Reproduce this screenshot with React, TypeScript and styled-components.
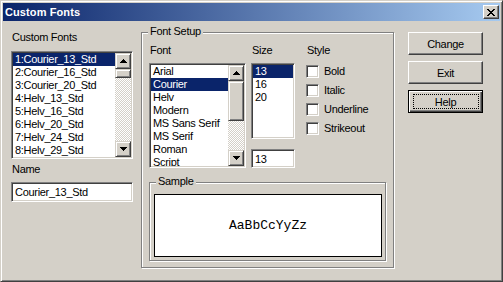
import styled, { createGlobalStyle, css } from 'styled-components';

const GlobalStyle = createGlobalStyle`
  html, body {
    margin: 0;
    padding: 0;
    background: #d4d0c8;
  }
  * {
    box-sizing: border-box;
  }
`

const raised = css`
  background-color: #d4d0c8;
  border: 1px solid;
  border-color: #d4d0c8 #404040 #404040 #d4d0c8;
  box-shadow: inset 1px 1px 0 #fff, inset -1px -1px 0 #808080;
`

const sunken = css`
  background-color: #fff;
  border: 1px solid;
  border-color: #808080 #fff #fff #808080;
  box-shadow: inset 1px 1px 0 #404040, inset -1px -1px 0 #d4d0c8;
`

const Window = styled.div`
  width: 503px;
  height: 282px;
  display: flex;
  flex-direction: column;
  padding: 2px;
  font-family: "Liberation Sans", Arial, sans-serif;
  font-size: 11px;
  letter-spacing: -0.3px;
  color: #000;
  ${raised}
`

const TitleBar = styled.div`
  height: 18px;
  display: flex;
  align-items: center;
  justify-content: space-between;
  padding: 0 1px 0 2px;
  background: linear-gradient(to right, #0a246a, #a6caf0);
`

const Title = styled.span`
  color: #fff;
  font-weight: 700;
  font-size: 11px;
  letter-spacing: 0.1px;
`

const CloseButton = styled.div`
  width: 16px;
  height: 14px;
  display: flex;
  align-items: center;
  justify-content: center;
  border: 1px solid;
  border-color: #fff #404040 #404040 #fff;
  box-shadow: inset -1px -1px 0 #808080;
  background: #d4d0c8;
`

const Body = styled.div`
  flex: 1;
  display: flex;
  align-items: flex-start;
  padding: 11px 0 0 8px;
`

const LeftColumn = styled.div`
  width: 122px;
  margin-top: -1px;
  display: flex;
  flex-direction: column;
`

const Label = styled.div<{ $gap?: number }>`
  height: 13px;
  line-height: 13px;
  padding-left: 1px;
  margin-bottom: ${p => p.$gap ?? 6}px;
  white-space: nowrap;
`

const ListBox = styled.div<{ $h: number }>`
  display: flex;
  height: ${p => p.$h}px;
  padding: 1px;
  ${sunken}
`

const Items = styled.ul`
  flex: 1;
  margin: 0;
  padding: 0;
  list-style: none;
  overflow: hidden;
`

const Item = styled.li<{ $selected?: boolean }>`
  height: 13px;
  line-height: 13px;
  padding-left: 2px;
  white-space: nowrap;
  background: ${p => (p.$selected ? '#0a246a' : 'transparent')};
  color: ${p => (p.$selected ? '#fff' : '#000')};
`

const ScrollBar = styled.div`
  width: 16px;
  display: flex;
  flex-direction: column;
`

const ScrollButton = styled.div`
  height: 16px;
  display: flex;
  align-items: center;
  justify-content: center;
  ${raised}
`

const Thumb = styled.div<{ $h: number }>`
  height: ${p => p.$h}px;
  ${raised}
`

const Track = styled.div`
  flex: 1;
  background: repeating-conic-gradient(#fff 0 25%, #d4d0c8 0 50%) 0 0 / 2px 2px;
`

const TextField = styled.input`
  width: 100%;
  height: 20px;
  margin: 0;
  padding: 0 0 0 3px;
  font: inherit;
  letter-spacing: inherit;
  color: #000;
  outline: none;
  ${sunken}
`

const GroupBox = styled.div`
  position: relative;
  border: 1px solid #808080;
  box-shadow: inset 1px 1px 0 #fff, 1px 1px 0 #fff;
`

const FontSetup = styled(GroupBox)`
  width: 253px;
  height: 236px;
  margin-left: 8px;
  padding: 11px 7px 5px 7px;
  display: flex;
  flex-direction: column;
`

const Legend = styled.span`
  position: absolute;
  top: -8px;
  left: 6px;
  padding: 0 2px;
  line-height: 13px;
  background: #d4d0c8;
`

const SetupRow = styled.div`
  display: flex;
  align-items: flex-start;
`

const Column = styled.div<{ $w: number; $ml?: number }>`
  width: ${p => p.$w}px;
  margin-left: ${p => p.$ml ?? 0}px;
  display: flex;
  flex-direction: column;
`

const SizeField = styled(TextField)`
  height: 19px;
  margin-top: 10px;
`

const Checks = styled.div`
  display: flex;
  flex-direction: column;
  gap: 6px;
  margin-top: 2px;
`

const CheckRow = styled.label`
  display: flex;
  align-items: center;
  gap: 5px;
  height: 13px;
  line-height: 13px;
`

const CheckBox = styled.span`
  width: 13px;
  height: 13px;
  ${sunken}
`

const Sample = styled(GroupBox)`
  width: 237px;
  height: 79px;
  margin-top: 14px;
  padding: 11px 3px 3px 4px;
  display: flex;
`

const SampleBox = styled.div`
  flex: 1;
  display: flex;
  align-items: center;
  justify-content: center;
  background: #fff;
  border: 1px solid #000;
  font-family: "Liberation Mono", "Courier New", monospace;
  font-size: 13px;
  letter-spacing: 0;
`

const Buttons = styled.div`
  margin-left: 14px;
  display: flex;
  flex-direction: column;
  gap: 6px;
`

const Button = styled.button<{ $default?: boolean }>`
  position: relative;
  width: 75px;
  height: 23px;
  margin: 0;
  padding: 0;
  font: inherit;
  letter-spacing: inherit;
  color: #000;
  background: #d4d0c8;
  border: 1px solid;
  border-color: #fff #404040 #404040 #fff;
  box-shadow: inset -1px -1px 0 #808080;

  ${p => p.$default && css`
    border-color: #000;
    box-shadow: inset 1px 1px 0 #fff, inset -1px -1px 0 #404040, inset -2px -2px 0 #808080;

    &::after {
      content: '';
      position: absolute;
      top: 3px;
      left: 4px;
      right: 3px;
      bottom: 3px;
      border: 1px dotted #000;
    }
  `}
`

const Arrow = ({ down }: { down?: boolean }) => (
  <svg width="7" height="4" viewBox="0 0 7 4" shapeRendering="crispEdges"
    style={down ? { transform: 'rotate(180deg)' } : undefined}>
    <path d="M3 0h1v1h-1z M2 1h3v1h-3z M1 2h5v1h-5z M0 3h7v1h-7z" fill="#000" />
  </svg>
)

const CloseGlyph = () => (
  <svg width="8" height="7" viewBox="0 0 8 7" shapeRendering="crispEdges">
    <path
      d="M0 0h2v1h-2z M6 0h2v1h-2z M1 1h2v1h-2z M5 1h2v1h-2z M2 2h4v1h-4z M3 3h2v1h-2z M2 4h4v1h-4z M1 5h2v1h-2z M5 5h2v1h-2z M0 6h2v1h-2z M6 6h2v1h-2z"
      fill="#000"
    />
  </svg>
)

const customFonts = [
  '1:Courier_13_Std', '2:Courier_16_Std', '3:Courier_20_Std', '4:Helv_13_Std',
  '5:Helv_16_Std', '6:Helv_20_Std', '7:Helv_24_Std', '8:Helv_29_Std',
]
const fonts = ['Arial', 'Courier', 'Helv', 'Modern', 'MS Sans Serif', 'MS Serif', 'Roman', 'Script']
const sizes = ['13', '16', '20']
const styles = ['Bold', 'Italic', 'Underline', 'Strikeout']

const App: React.FC = () => {
  return (
    <>
      <GlobalStyle />
      <Window>
        <TitleBar>
          <Title>Custom Fonts</Title>
          <CloseButton><CloseGlyph /></CloseButton>
        </TitleBar>
        <Body>
          <LeftColumn>
            <Label $gap={7}>Custom Fonts</Label>
            <ListBox $h={108}>
              <Items>
                {customFonts.map((f, i) => <Item key={f} $selected={i === 0}>{f}</Item>)}
              </Items>
              <ScrollBar>
                <ScrollButton><Arrow /></ScrollButton>
                <Thumb $h={9} />
                <Track />
                <ScrollButton><Arrow down /></ScrollButton>
              </ScrollBar>
            </ListBox>
            <Label $gap={6} style={{ marginTop: 4 }}>Name</Label>
            <TextField readOnly defaultValue="Courier_13_Std" />
          </LeftColumn>

          <FontSetup>
            <Legend>Font Setup</Legend>
            <SetupRow>
              <Column $w={97}>
                <Label>Font</Label>
                <ListBox $h={105}>
                  <Items>
                    {fonts.map(f => <Item key={f} $selected={f === 'Courier'}>{f}</Item>)}
                  </Items>
                  <ScrollBar>
                    <ScrollButton><Arrow /></ScrollButton>
                    <Thumb $h={40} />
                    <Track />
                    <ScrollButton><Arrow down /></ScrollButton>
                  </ScrollBar>
                </ListBox>
              </Column>
              <Column $w={44} $ml={5}>
                <Label>Size</Label>
                <ListBox $h={76}>
                  <Items>
                    {sizes.map(s => <Item key={s} $selected={s === '13'}>{s}</Item>)}
                  </Items>
                </ListBox>
                <SizeField readOnly defaultValue="13" />
              </Column>
              <Column $w={80} $ml={11}>
                <Label>Style</Label>
                <Checks>
                  {styles.map(s => (
                    <CheckRow key={s}><CheckBox />{s}</CheckRow>
                  ))}
                </Checks>
              </Column>
            </SetupRow>
            <Sample>
              <Legend>Sample</Legend>
              <SampleBox>AaBbCcYyZz</SampleBox>
            </Sample>
          </FontSetup>

          <Buttons>
            <Button>Change</Button>
            <Button>Exit</Button>
            <Button $default>Help</Button>
          </Buttons>
        </Body>
      </Window>
    </>
  );
}

export default App;
